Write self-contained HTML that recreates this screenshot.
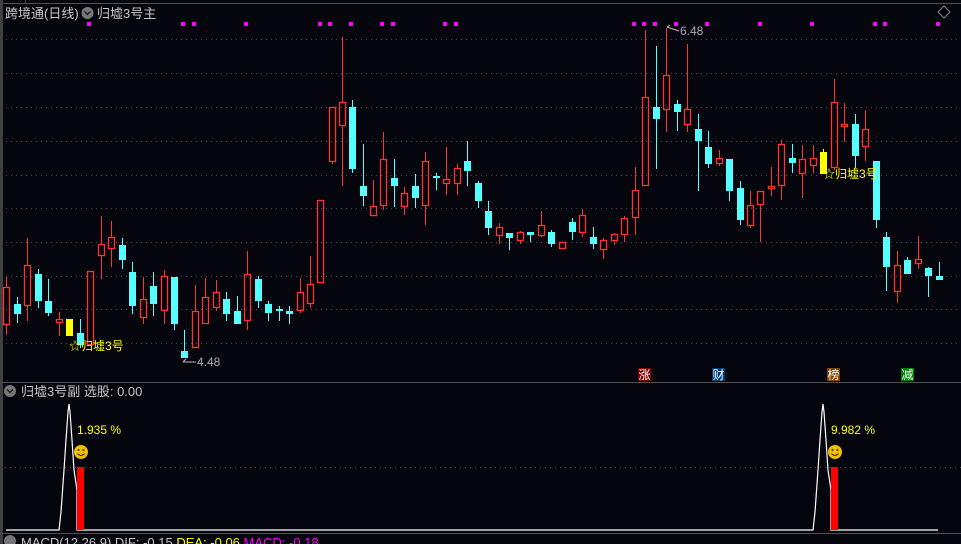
<!DOCTYPE html>
<html><head><meta charset="utf-8"><style>
html,body{margin:0;padding:0;background:#05050d;width:961px;height:544px;overflow:hidden}
svg{display:block}
text{font-family:"Liberation Sans","Noto Sans CJK SC",sans-serif}
</style></head><body>
<svg id="s" width="961" height="544" xmlns="http://www.w3.org/2000/svg">
<rect width="961" height="544" fill="#05050d"/>
<line x1="0" y1="3.5" x2="961" y2="3.5" stroke="#505050"/>
<line x1="25.5" y1="0" x2="25.5" y2="3" stroke="#505050"/>
<line x1="1.5" y1="0" x2="1.5" y2="544" stroke="#404040" stroke-width="3"/>
<line x1="0" y1="382.5" x2="961" y2="382.5" stroke="#505050"/>
<line x1="0" y1="533.5" x2="961" y2="533.5" stroke="#505050"/>
<g id="grid" stroke="#4a4a4a" stroke-dasharray="1,4"></g>
<polygon points="944,6 950,12 944,18 938,12" fill="none" stroke="#888"/>
<text x="5" y="18" font-size="13" fill="#c8c8c8">跨境通(日线)</text>
<circle cx="87.5" cy="13" r="6" fill="#777"/>
<path d="M84.5 11.5 L87.5 14.5 L90.5 11.5" stroke="#222" stroke-width="1.5" fill="none"/>
<text x="97" y="18" font-size="13" fill="#c8c8c8">归墟3号主</text>
<g id="dots" fill="#ff00ff"></g>
<g id="candles"></g>
<text x="69" y="350" font-size="12" fill="#ffff00">☆归墟3号</text>
<text x="823" y="178" font-size="12" fill="#ffff00">☆归墟3号</text>
<path d="M183 362 L196 362 M183 362 l3 -3" stroke="#bbb" fill="none"/>
<text x="197" y="366" font-size="12" fill="#aab">4.48</text>
<path d="M667 27 L679 31 M667 27 l3 -2" stroke="#bbb" fill="none"/>
<text x="680" y="35" font-size="12" fill="#aab">6.48</text>
<rect x="638" y="368" width="13" height="13" fill="#800000"/><text x="638.5" y="379" font-size="12" fill="#fff">涨</text>
<rect x="712" y="368" width="13" height="13" fill="#003d7a"/><text x="712.5" y="379" font-size="12" fill="#fff">财</text>
<rect x="827" y="368" width="13" height="13" fill="#804000"/><text x="827.5" y="379" font-size="12" fill="#fff">榜</text>
<rect x="901" y="368" width="13" height="13" fill="#008000"/><text x="901.5" y="379" font-size="12" fill="#fff">减</text>
<circle cx="10" cy="391" r="6" fill="#777"/>
<path d="M7 389.5 L10 392.5 L13 389.5" stroke="#222" stroke-width="1.5" fill="none"/>
<text x="21" y="396" font-size="13" fill="#c8c8c8">归墟3号副  选股: 0.00</text>
<line x1="0" y1="467.5" x2="961" y2="467.5" stroke="#4a4a4a" stroke-dasharray="1,4"/>
<polyline points="6,530 59,530 61,512 64,470 66,440 68,412 69,404 70,412 72,440 74,470 77,490 77,530 84,530 813,530 815,512 818,470 820,440 822,412 823,404 824,412 826,440 828,470 831,490 831,530 838,530 938,530" fill="none" stroke="#fff" stroke-width="1.2"/>
<rect x="77" y="467" width="7" height="63" fill="#ff0000"/>
<rect x="831" y="467" width="7" height="63" fill="#ff0000"/>
<text x="77" y="434" font-size="12" fill="#ffff00">1.935 %</text>
<text x="831" y="434" font-size="12" fill="#ffff00">9.982 %</text>
<g><circle cx="81" cy="452" r="7" fill="#f0c000"/><circle cx="78.5" cy="450" r="1" fill="#333"/><circle cx="83.5" cy="450" r="1" fill="#333"/><path d="M77.5 453.5 Q81 457.5 84.5 453.5" stroke="#333" fill="none"/></g>
<g><circle cx="835" cy="452" r="7" fill="#f0c000"/><circle cx="832.5" cy="450" r="1" fill="#333"/><circle cx="837.5" cy="450" r="1" fill="#333"/><path d="M831.5 453.5 Q835 457.5 838.5 453.5" stroke="#333" fill="none"/></g>
<circle cx="10" cy="541" r="6" fill="#777"/>
<text x="21" y="547" font-size="13" fill="#c8c8c8">MACD(12,26,9)  DIF: -0.15 <tspan fill="#ffff00">DEA: -0.06</tspan> <tspan fill="#ff00ff">MACD: -0.18</tspan></text>
</svg>
<script>
var NS="http://www.w3.org/2000/svg";
function el(p,t,a){var e=document.createElementNS(NS,t);for(var k in a)e.setAttribute(k,a[k]);p.appendChild(e);return e;}
var g=document.getElementById('grid');
[39,73,107,141,175,208,242,276,309,343].forEach(function(y){el(g,'line',{x1:6,y1:y+.5,x2:961,y2:y+.5});});
var d=document.getElementById('dots');
[89,183,194,246,320,330,351,382,393,445,456,634,644,655,676,707,760,812,875,885,938].forEach(function(x){el(d,'rect',{x:x-2,y:22,width:4,height:4});});
var C=[
[6,287,325,277,335,'r'],[17,304,314,297,323,'c'],[27,265,306,238,321,'r'],[38,274,301,269,308,'c'],[48,301,313,279,316,'c'],
[59,319,323,312,336,'r'],[69,319,336,319,336,'y'],[80,333,345,319,348,'c'],[90,271,345,271,345,'r'],[101,244,256,216,279,'r'],
[111,237,249,221,267,'r'],[122,245,260,238,269,'c'],[132,272,306,262,314,'c'],[143,299,318,277,324,'r'],[153,286,304,272,316,'c'],
[164,276,311,270,324,'r'],[174,277,324,277,330,'c'],[184,351,358,330,358,'c'],[195,311,348,285,348,'r'],[205,297,324,278,324,'r'],
[216,292,308,280,311,'r'],[226,299,314,292,321,'c'],[237,311,324,296,324,'c'],[247,274,321,251,330,'r'],[258,279,301,276,308,'c'],
[268,304,313,301,321,'c'],[279,309,311,306,321,'c'],[289,311,314,306,324,'c'],[300,292,311,278,313,'r'],[310,284,304,256,308,'r'],
[320,200,283,200,283,'r'],[332,107,162,107,164,'r'],[342,102,126,37,186,'r'],[352,107,169,100,173,'c'],[363,186,196,144,206,'c'],
[373,206,216,180,216,'r'],[383,159,206,132,210,'r'],[394,178,186,159,207,'c'],[404,193,207,187,215,'r'],[415,186,198,174,208,'c'],
[425,161,206,152,225,'r'],[436,176,178,173,190,'c'],[446,179,184,147,195,'r'],[457,168,184,164,195,'r'],[467,161,171,141,186,'c'],
[478,183,201,181,208,'c'],[488,211,228,201,235,'c'],[499,227,236,223,244,'r'],[509,233,238,233,250,'c'],[520,232,241,231,244,'r'],
[530,232,235,232,242,'c'],[541,225,236,211,237,'r'],[551,232,244,230,247,'c'],[562,242,249,242,249,'r'],[572,222,232,218,240,'c'],
[582,215,233,209,237,'r'],[593,237,244,227,249,'c'],[603,240,250,238,259,'r'],[614,234,241,233,245,'r'],[624,218,235,216,242,'r'],
[635,190,218,167,235,'r'],[645,97,186,30,186,'r'],[656,107,119,46,169,'c'],[666,75,110,28,132,'r'],[677,104,112,100,131,'c'],
[687,109,125,44,132,'r'],[698,129,141,114,191,'c'],[708,147,164,131,168,'c'],[719,158,164,150,166,'r'],[729,159,191,159,201,'c'],
[740,188,220,181,225,'c'],[750,205,226,191,228,'r'],[760,191,205,191,242,'r'],[771,186,189,167,196,'r'],[781,144,186,140,200,'r'],
[792,158,163,144,173,'c'],[802,159,174,145,198,'r'],[813,158,166,145,173,'r'],[823,152,174,149,174,'y'],[834,102,168,79,170,'r'],
[844,124,127,103,142,'r'],[855,124,156,114,168,'c'],[865,129,147,110,161,'r'],[876,161,220,161,228,'c'],[886,237,267,232,291,'c'],
[897,265,292,251,303,'r'],[907,260,274,257,274,'c'],[918,259,264,236,269,'r'],[928,268,276,267,297,'c'],[939,276,280,262,280,'c']];
var cg=document.getElementById('candles');
C.forEach(function(c){var x=c[0],col=c[5]=='r'?'#ff3232':(c[5]=='c'?'#54ffff':'#ffff00');
 if(c[5]=='r'){
  if(c[3]<c[1])el(cg,'line',{x1:x+.5,y1:c[3],x2:x+.5,y2:c[1],stroke:col});
  if(c[4]>c[2])el(cg,'line',{x1:x+.5,y1:c[2],x2:x+.5,y2:c[4],stroke:col});
  el(cg,'rect',{x:x-2.5,y:c[1]+.5,width:6,height:Math.max(c[2]-c[1]-1,1),fill:'none',stroke:col,'stroke-width':1.3});
 }else{
  el(cg,'line',{x1:x+.5,y1:c[3],x2:x+.5,y2:c[4],stroke:col});
  el(cg,'rect',{x:x-3,y:c[1],width:7,height:Math.max(c[2]-c[1],2),fill:col});
 }});
</script>
</body></html>
